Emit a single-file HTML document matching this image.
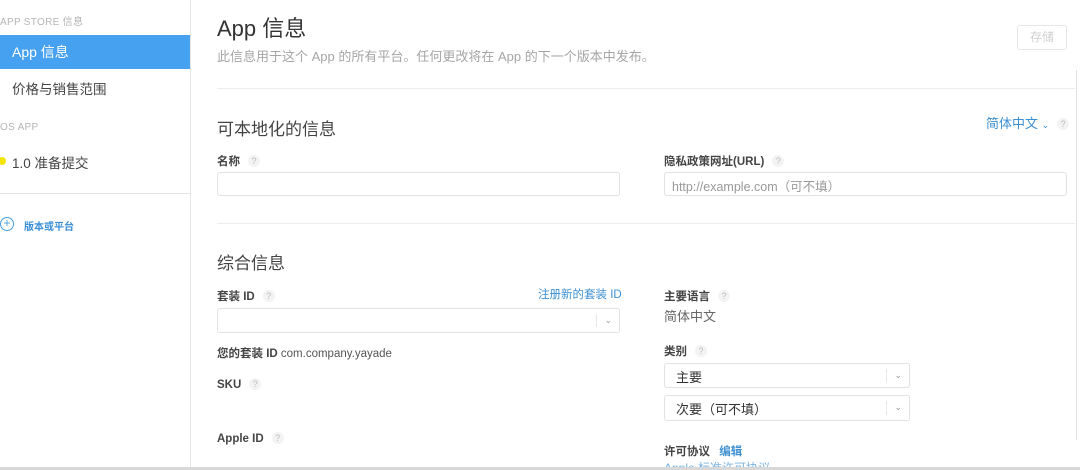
<!DOCTYPE html>
<html style="width:1080px;height:470px;overflow:hidden"><head><meta charset="utf-8"><style>
*{margin:0;padding:0;box-sizing:border-box}
body{width:1080px;height:470px;overflow:hidden;background:#fff;position:relative;font-family:"Liberation Sans","Noto Sans CJK SC",sans-serif;color:#333}
.a{position:absolute;white-space:nowrap}
.sm{font-size:10px;color:#b5b5b5;letter-spacing:.3px}
.lab{font-size:11.5px;font-weight:bold;color:#444}
.q{display:inline-block;width:12px;height:12px;border-radius:6px;background:#f3f3f3;color:#bbb;font-size:9px;text-align:center;line-height:12px;font-weight:normal;margin-left:8px;vertical-align:1px}
.in{position:absolute;border:1px solid #e2e2e2;border-radius:3px;background:#fff}
.hr{position:absolute;height:1px;background:#ececec}
.sel .sep{position:absolute;right:22px;top:5px;bottom:5px;width:1px;background:#e6e6e6}
.sel .ch{position:absolute;right:7px;top:50%;margin-top:-6px;font-size:9px;color:#999}
</style></head><body>
<div class="a sm" style="left:0;top:13px">APP STORE 信息</div>
<div class="a" style="left:0;top:35px;width:190px;height:34px;background:#47a1f1"></div>
<div class="a" style="left:12px;top:42px;font-size:14px;color:#fff">App 信息</div>
<div class="a" style="left:12px;top:78px;font-size:13.5px;color:#444">价格与销售范围</div>
<div class="a sm" style="left:0;top:122px">OS APP</div>
<div class="a" style="left:-2px;top:157px;width:8px;height:8px;border-radius:4px;background:#f2e600"></div>
<div class="a" style="left:12px;top:152px;font-size:13.5px;color:#444">1.0 准备提交</div>
<div class="hr" style="left:0;top:193px;width:190px;background:#e4e4e4"></div>
<div class="a" style="left:0;top:217px;width:14px;height:14px;border:1px solid #4a9fe0;border-radius:7px;color:#4a9fe0;font-size:12px;line-height:11px;text-align:center">+</div>
<div class="a" style="left:24px;top:218px;font-size:10px;font-weight:bold;color:#3b8fd6">版本或平台</div>
<div class="a" style="left:190px;top:0;width:1px;height:470px;background:#e6e6e6"></div>

<div class="a" style="left:217px;top:11px;font-size:22px;color:#333">App 信息</div>
<div class="a" style="left:217px;top:46px;font-size:13px;color:#a5a5a5">此信息用于这个 App 的所有平台。任何更改将在 App 的下一个版本中发布。</div>
<div class="a" style="left:1017px;top:25px;width:50px;height:25px;border:1px solid #e6e6e6;border-radius:3px;font-size:12px;color:#d0d0d0;text-align:center;line-height:23px">存储</div>
<div class="hr" style="left:217px;top:88px;width:858px"></div>

<div class="a" style="left:217px;top:115px;font-size:17px;color:#444">可本地化的信息</div>
<div class="a" style="left:986px;top:113px;font-size:13px;color:#3d8fd1">简体中文 <span style="font-size:9px">⌄</span><span class="q">?</span></div>
<div class="a lab" style="left:217px;top:153px">名称<span class="q">?</span></div>
<div class="in" style="left:217px;top:172px;width:403px;height:24px"></div>
<div class="a lab" style="left:664px;top:153px">隐私政策网址(URL)<span class="q">?</span></div>
<div class="in" style="left:664px;top:172px;width:403px;height:24px"></div>
<div class="a" style="left:672px;top:176px;font-size:12.5px;color:#999">http://example.com（可不填）</div>
<div class="hr" style="left:217px;top:223px;width:858px"></div>

<div class="a" style="left:217px;top:249px;font-size:17px;color:#444">综合信息</div>
<div class="a lab" style="left:217px;top:288px">套装 ID<span class="q">?</span></div>
<div class="a" style="left:538px;top:286px;font-size:11.5px;color:#3d8fd1">注册新的套装 ID</div>
<div class="in sel" style="left:217px;top:308px;width:403px;height:25px"><div class="sep"></div><div class="ch">⌄</div></div>
<div class="a" style="left:217px;top:345px;font-size:11.5px;color:#555"><b style="color:#444">您的套装 ID</b> com.company.yayade</div>
<div class="a lab" style="left:217px;top:378px">SKU<span class="q">?</span></div>
<div class="a lab" style="left:217px;top:432px">Apple ID<span class="q">?</span></div>

<div class="a lab" style="left:664px;top:288px">主要语言<span class="q">?</span></div>
<div class="a" style="left:664px;top:306px;font-size:13px;color:#666">简体中文</div>
<div class="a lab" style="left:664px;top:343px">类别<span class="q">?</span></div>
<div class="in sel" style="left:664px;top:363px;width:246px;height:25px"><div class="sep"></div><div class="ch">⌄</div></div>
<div class="a" style="left:676px;top:367px;font-size:13px;color:#333">主要</div>
<div class="in sel" style="left:664px;top:395px;width:246px;height:26px"><div class="sep"></div><div class="ch">⌄</div></div>
<div class="a" style="left:676px;top:399px;font-size:13px;color:#333">次要（可不填）</div>
<div class="a lab" style="left:664px;top:443px">许可协议 <span style="color:#3d8fd1;margin-left:6px">编辑</span></div>
<div class="a" style="left:664px;top:461px;height:6px;overflow:hidden;font-size:12px;line-height:14px;color:#7ab3e0">Apple 标准许可协议</div>

<div class="a" style="left:1076px;top:70px;width:1px;height:370px;background:#e0e0e0"></div>
<div class="a" style="left:0;top:467px;width:1080px;height:3px;background:#d8d8d8"></div>
</body></html>
